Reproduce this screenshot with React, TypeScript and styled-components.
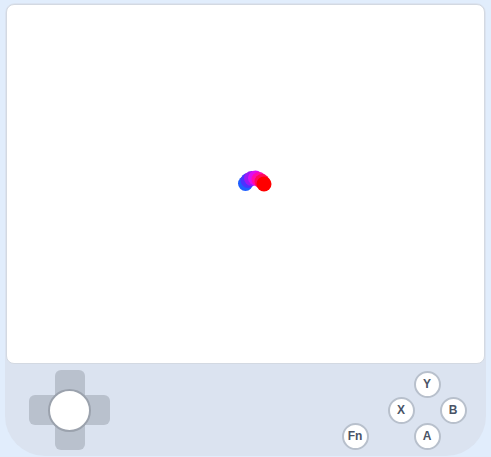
import React from "react";
import styled, { createGlobalStyle } from "styled-components";

const Global = createGlobalStyle`
  html, body { margin: 0; padding: 0; background: #e1edfc; }
  body { font-family: "Liberation Sans", Arial, sans-serif; }
`;

const Page = styled.div`
  width: 491px;
  height: 457px;
  padding: 3px 0 0 5px;
  box-sizing: border-box;
  background: #e1edfc;
`;

const Device = styled.div`
  width: 481px;
  height: 453px;
  box-sizing: border-box;
  padding: 1px 1px 0 1px;
  background: #dbe3f0;
  border-radius: 10px 10px 40px 40px;
  display: flex;
  flex-direction: column;
`;

const Screen = styled.div`
  height: 360px;
  box-sizing: border-box;
  background: #ffffff;
  border: 1px solid #d3d9e2;
  border-radius: 8px;
  position: relative;
  overflow: hidden;
`;

const Trail = styled.svg`
  position: absolute;
  left: 0;
  top: 0;
`;

const Controls = styled.div`
  flex: 1;
  display: flex;
  align-items: flex-start;
  justify-content: space-between;
  padding: 6px 19px 0 23px;
`;

const DPad = styled.div`
  width: 81px;
  height: 80px;
  position: relative;
  display: flex;
  align-items: center;
  justify-content: center;
`;

const Bar = styled.div<{ $vertical?: boolean }>`
  position: absolute;
  background: #b9c1cd;
  border-radius: 6px;
  width: ${(p) => (p.$vertical ? "30px" : "81px")};
  height: ${(p) => (p.$vertical ? "80px" : "30px")};
`;

const Stick = styled.div`
  position: relative;
  width: 43px;
  height: 43px;
  box-sizing: border-box;
  border-radius: 50%;
  background: #ffffff;
  border: 2px solid #9ba2ad;
`;

const Right = styled.div`
  display: flex;
  align-items: flex-end;
  gap: 20px;
  padding-top: 1px;
`;

const Diamond = styled.div`
  display: grid;
  grid-template-columns: repeat(3, 26px);
  grid-template-rows: repeat(3, 26px);
`;

const Btn = styled.button<{ $col?: number; $row?: number }>`
  grid-column: ${(p) => p.$col ?? "auto"};
  grid-row: ${(p) => p.$row ?? "auto"};
  width: 27px;
  height: 27px;
  margin: -0.5px;
  box-sizing: border-box;
  border-radius: 50%;
  background: #ffffff;
  border: 2px solid #b8c0cc;
  padding: 0;
  font-family: "Liberation Sans", Arial, sans-serif;
  font-weight: bold;
  font-size: 12px;
  color: #4a5366;
  display: flex;
  align-items: center;
  justify-content: center;
`;

const dots = [
  { x: 238.5, y: 178.5, c: "#1f5fff" },
  { x: 241, y: 175.5, c: "#4a33ff" },
  { x: 244.5, y: 173.5, c: "#9a18f5" },
  { x: 248.5, y: 173, c: "#dd0ef0" },
  { x: 252, y: 174.5, c: "#ff0aa8" },
  { x: 255, y: 176.5, c: "#ff0a55" },
  { x: 257, y: 179, c: "#ff0000" },
];

export default function App() {
  return (
    <>
      <Global />
      <Page>
        <Device>
          <Screen>
            <Trail width="478" height="358">
              {dots.map((d, i) => (
                <circle key={i} cx={d.x} cy={d.y} r={7.5} fill={d.c} />
              ))}
            </Trail>
          </Screen>
          <Controls>
            <DPad>
              <Bar $vertical />
              <Bar />
              <Stick />
            </DPad>
            <Right>
              <Btn>Fn</Btn>
              <Diamond>
                <Btn $col={2} $row={1}>Y</Btn>
                <Btn $col={1} $row={2}>X</Btn>
                <Btn $col={3} $row={2}>B</Btn>
                <Btn $col={2} $row={3}>A</Btn>
              </Diamond>
            </Right>
          </Controls>
        </Device>
      </Page>
    </>
  );
}
